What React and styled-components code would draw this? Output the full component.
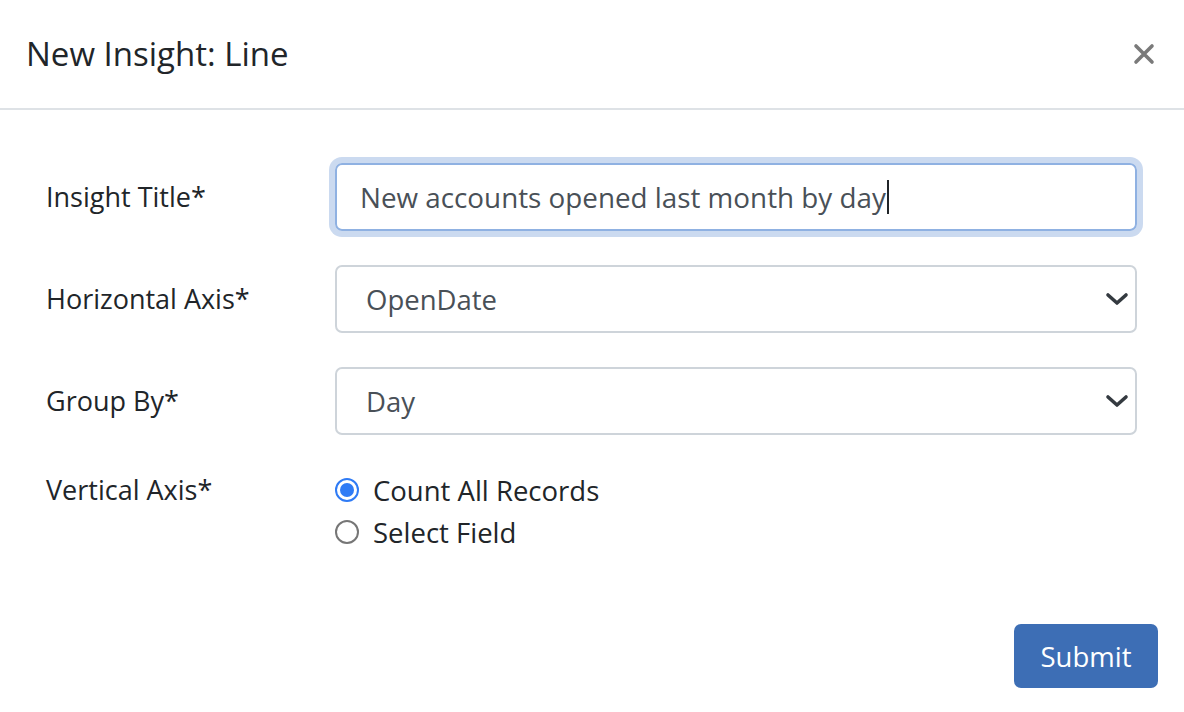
import React from 'react';
import styled, { createGlobalStyle } from 'styled-components';

const GlobalStyle = createGlobalStyle`
  html, body {
    margin: 0;
    padding: 0;
    background: #fff;
  }
  body {
    font-family: 'Open Sans', 'Noto Sans', sans-serif;
    color: #212529;
  }
`;

const Modal = styled.div`
  width: 1184px;
  height: 712px;
  display: flex;
  flex-direction: column;
  background: #fff;
`;

const Header = styled.header`
  height: 108px;
  padding: 0 28px 0 26px;
  display: flex;
  align-items: center;
  justify-content: space-between;
  border-bottom: 2px solid #dee2e6;
`;

const Title = styled.h5`
  margin: 0;
  font-size: 33px;
  font-weight: 400;
  line-height: 1.2;
  color: #212529;
`;

const CloseButton = styled.button`
  border: 0;
  background: none;
  padding: 0;
  width: 24px;
  height: 24px;
  display: flex;
  align-items: center;
  justify-content: center;
  cursor: pointer;
  color: #7a7a7a;
`;

const Body = styled.div`
  padding: 53px 46px 0 46px;
  flex: 1;
`;

const Row = styled.div`
  display: grid;
  grid-template-columns: 289px 802px;
  margin-bottom: ${p => p.gap ?? 34}px;
`;

const Label = styled.label`
  font-size: 27px;
  line-height: 42px;
  padding-top: ${p => p.top ?? 13}px;
  color: #212529;
`;

const TextField = styled.div`
  height: 68px;
  box-sizing: border-box;
  border: 2px solid #8fb1e2;
  border-radius: 7px;
  box-shadow: 0 0 0 6px #cbdaf0;
  padding: 0 23px;
  display: flex;
  align-items: center;
  font-size: 27.8px;
  color: #495057;
`;

const Caret = styled.span`
  display: inline-block;
  width: 2px;
  height: 34px;
  margin-left: 1px;
  background: #212529;
`;

const SelectWrap = styled.div`
  position: relative;
`;

const Select = styled.select`
  width: 100%;
  height: 68px;
  box-sizing: border-box;
  border: 2px solid #ced4da;
  border-radius: 7px;
  padding: 0 0 0 29px;
  appearance: none;
  background: #fff;
  font-family: inherit;
  font-size: 27.5px;
  color: #495057;
  outline: none;
`;

const Chevron = styled.svg`
  position: absolute;
  right: 8px;
  top: 27px;
  pointer-events: none;
`;

const RadioList = styled.div`
  display: flex;
  flex-direction: column;
`;

const RadioOption = styled.label`
  display: flex;
  align-items: center;
  gap: 14px;
  height: 42px;
  font-size: 27.5px;
  color: #212529;
  cursor: pointer;
`;

const RadioDot = styled.span`
  width: 24px;
  height: 24px;
  box-sizing: border-box;
  border-radius: 50%;
  border: 2px solid ${p => (p.checked ? '#2f7bf5' : '#767676')};
  background: #fff;
  display: flex;
  align-items: center;
  justify-content: center;
  &::after {
    content: '';
    width: 14px;
    height: 14px;
    border-radius: 50%;
    background: ${p => (p.checked ? '#2f7bf5' : 'transparent')};
  }
`;

const Footer = styled.footer`
  display: flex;
  justify-content: flex-end;
  padding: 0 26px 24px;
`;

const SubmitButton = styled.button`
  width: 144px;
  height: 64px;
  border: 0;
  border-radius: 7px;
  background: #3d6eb5;
  color: #fff;
  font-family: inherit;
  font-size: 27.5px;
  cursor: pointer;
`;

const ChevronIcon = () => (
  <Chevron width="24" height="14" viewBox="0 0 24 14">
    <path d="M3 3 L12 11 L21 3" fill="none" stroke="#343a40" strokeWidth="3.6" strokeLinecap="round" strokeLinejoin="round" />
  </Chevron>
);

const SelectField = ({ value, options }) => (
  <SelectWrap>
    <Select defaultValue={value}>
      {options.map(o => (
        <option key={o}>{o}</option>
      ))}
    </Select>
    <ChevronIcon />
  </SelectWrap>
);

const radios = [
  { label: 'Count All Records', checked: true },
  { label: 'Select Field', checked: false },
];

export default function App() {
  return (
    <>
      <GlobalStyle />
      <Modal>
        <Header>
          <Title>New Insight: Line</Title>
          <CloseButton aria-label="Close">
            <svg width="22" height="22" viewBox="0 0 22 22">
              <path d="M3 3 L19 19 M19 3 L3 19" stroke="currentColor" strokeWidth="3.6" strokeLinecap="round" />
            </svg>
          </CloseButton>
        </Header>
        <Body>
          <Row>
            <Label>Insight Title*</Label>
            <TextField role="textbox">
              New accounts opened last month by day
              <Caret />
            </TextField>
          </Row>
          <Row>
            <Label>Horizontal Axis*</Label>
            <SelectField value="OpenDate" options={['OpenDate', 'CloseDate']} />
          </Row>
          <Row>
            <Label>Group By*</Label>
            <SelectField value="Day" options={['Day', 'Week', 'Month']} />
          </Row>
          <Row>
            <Label top={0}>Vertical Axis*</Label>
            <RadioList>
              {radios.map(r => (
                <RadioOption key={r.label}>
                  <RadioDot checked={r.checked} />
                  {r.label}
                </RadioOption>
              ))}
            </RadioList>
          </Row>
        </Body>
        <Footer>
          <SubmitButton>Submit</SubmitButton>
        </Footer>
      </Modal>
    </>
  );
}
